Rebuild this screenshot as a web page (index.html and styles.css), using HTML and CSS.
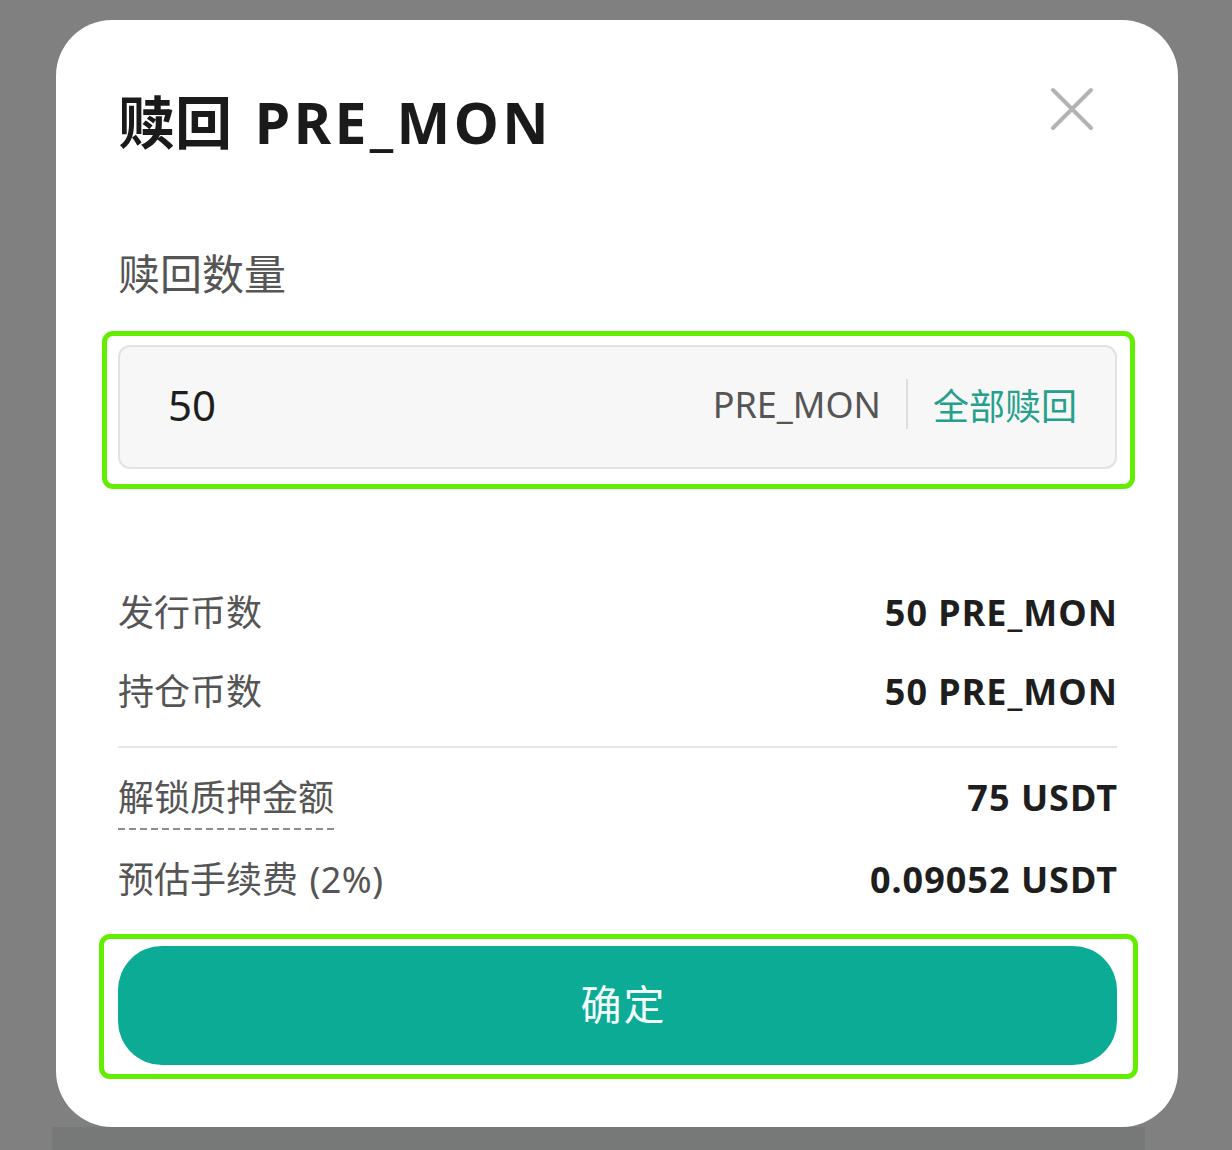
FILE: index.html
```html
<!DOCTYPE html>
<html lang="zh-CN">
<head>
<meta charset="utf-8">
<title>赎回 PRE_MON</title>
<link rel="stylesheet" href="styles.css">
</head>
<body>
<div class="page">
  <div class="modal">
    <div class="header">
      <h1 class="title">赎回 <span class="title-en">PRE_MON</span></h1>
      <button class="close" aria-label="关闭">
        <svg width="44" height="44" viewBox="0 0 44 44"><path d="M3 3 L41 41 M41 3 L3 41" stroke="#b3b3b3" stroke-width="4" stroke-linecap="round" fill="none"/></svg>
      </button>
    </div>
    <div class="field-label">赎回数量</div>
    <div class="mark mark-input">
      <div class="input">
        <span class="amount">50</span>
        <span class="unit">PRE_MON</span>
        <span class="vsep"></span>
        <span class="all">全部赎回</span>
      </div>
    </div>
    <div class="rows">
      <div class="row"><span class="k">发行币数</span><span class="v">50 PRE_MON</span></div>
      <div class="row"><span class="k">持仓币数</span><span class="v">50 PRE_MON</span></div>
    </div>
    <div class="hr"></div>
    <div class="rows rows2">
      <div class="row"><span class="k dashed">解锁质押金额</span><span class="v">75 USDT</span></div>
      <div class="row"><span class="k">预估手续费 <span class="pct">(2%)</span></span><span class="v">0.09052 USDT</span></div>
    </div>
    <div class="mark mark-btn">
      <button class="confirm">确定</button>
    </div>
  </div>
  <div class="sheet"></div>
</div>
</body>
</html>
```
FILE: styles.css
```css
* { box-sizing: border-box; }
html, body { margin: 0; padding: 0; }
body {
  background: #808080;
  font-family: "Noto Sans", "Noto Sans CJK SC", sans-serif;
  width: 1232px;
  height: 1150px;
  overflow: hidden;
}
.page {
  padding-top: 20px;
}
.modal {
  margin-left: 56px;
  width: 1122px;
  height: 1107px;
  background: #fff;
  border-radius: 56px;
  padding: 67px 61px 0 62px;
  position: relative;
  z-index: 1;
}
.header {
  display: flex;
  justify-content: space-between;
  align-items: flex-start;
}
.title {
  margin: 0;
  font-size: 57px;
  line-height: 70px;
  font-weight: 700;
  color: #1a1a1a;
}
.title-en {
  margin-left: 8px;
  letter-spacing: 3.4px;
}
.close {
  border: 0;
  background: none;
  padding: 0;
  margin: 0 23px 0 0;
  width: 44px;
  height: 44px;
  display: block;
}
.close svg { display: block; }
.field-label {
  margin-top: 93px;
  font-size: 42px;
  line-height: 48px;
  color: #555;
}
.mark {
  border: 5px solid #63ee00;
  border-radius: 11px;
}
.mark-input {
  margin: 33px -18px 0 -16px;
  padding: 9px 13px 15px 11px;
}
.input {
  height: 124px;
  background: #f7f7f7;
  border: 2px solid #e2e2e2;
  border-radius: 12px;
  display: flex;
  align-items: center;
  padding: 0 38px 6px 48px;
}
.amount {
  font-size: 42px;
  color: #1e1e1e;
  flex: 1;
}
.unit {
  font-size: 36px;
  color: #555;
}
.vsep {
  width: 2px;
  height: 50px;
  background: #dedede;
  margin: 0 25px;
}
.all {
  font-size: 36px;
  color: #24a08c;
}
.rows {
  margin-top: 102px;
  display: flex;
  flex-direction: column;
  gap: 35px;
}
.rows2 {
  margin-top: 28px;
  gap: 38px;
}
.row {
  display: flex;
  justify-content: space-between;
  align-items: center;
  height: 44px;
}
.k {
  font-size: 36px;
  line-height: 44px;
  color: #555;
}
.pct {
  margin-left: 2px;
  letter-spacing: 0.5px;
}
.k.dashed {
  padding-bottom: 8px;
  margin-bottom: -10px;
  border-bottom: 2px solid transparent;
  background: repeating-linear-gradient(90deg, #8c8c8c 0 7px, transparent 7px 11px) left bottom / 100% 2px no-repeat;
  background-origin: border-box;
  background-clip: border-box;
}
.v {
  font-size: 36px;
  line-height: 44px;
  font-weight: 700;
  color: #1e1e1e;
  letter-spacing: 1px;
  margin-right: -1px;
}
.hr {
  margin-top: 32px;
  height: 2px;
  background: #e6e6e6;
}
.mark-btn {
  margin: 32px -21px 0 -19px;
  padding: 7px 16px 9px 14px;
}
.confirm {
  display: block;
  width: 100%;
  height: 119px;
  border: 0;
  border-radius: 44px;
  background: #0cab96;
  color: #f4fffd;
  font-family: "Noto Sans CJK SC", sans-serif;
  font-size: 41px;
  letter-spacing: 2px;
  padding: 0 0 8px 12px;
}
.sheet {
  margin-left: 52px;
  width: 1093px;
  height: 40px;
  background: #767978;
}
```
